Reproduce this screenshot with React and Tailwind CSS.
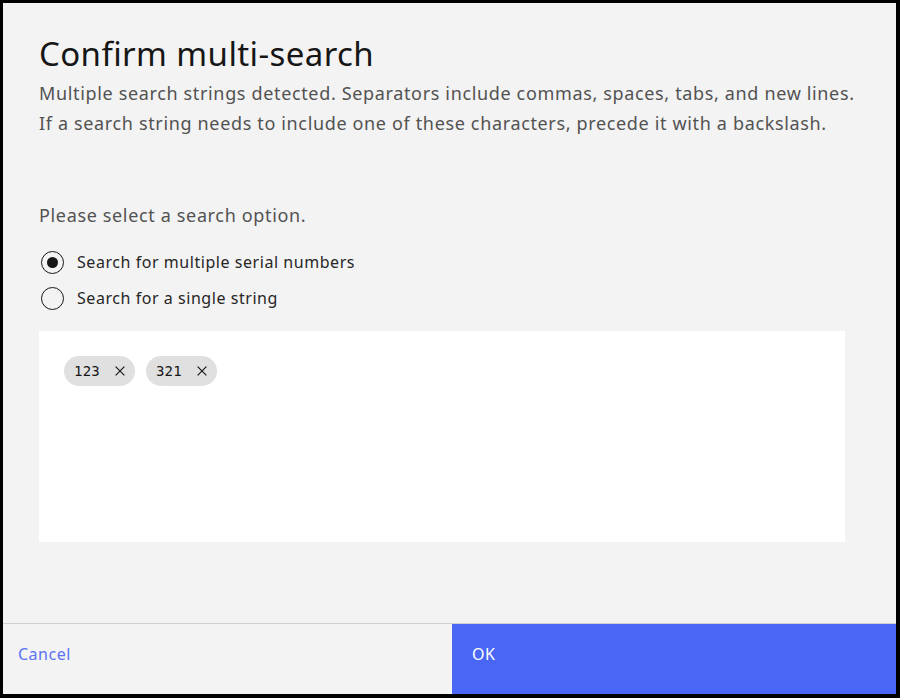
import React from 'react'

const Radio = ({ checked, label }) => {
  return (
    <label className="flex items-center gap-[13px] h-9 cursor-pointer">
      <span className="ml-[2px] w-[23px] h-[23px] rounded-full border-[1.5px] border-[#161616] flex items-center justify-center bg-transparent">
        {checked && <span className="w-[11px] h-[11px] rounded-full bg-[#161616]" />}
      </span>
      <span className="text-[16px] tracking-[0.55px] text-[#262626]">{label}</span>
    </label>
  )
}

const Chip = ({ value }) => {
  return (
    <div className="h-[30px] flex items-center gap-[13px] pl-[10px] pr-[8px] rounded-full bg-[#e0e0e0] text-[#161616]">
      <span className="text-[14px] font-['DejaVu_Sans_Mono',monospace] tracking-[0.2px]">{value}</span>
      <svg width="14" height="14" viewBox="0 0 16 16" fill="none" stroke="#161616" strokeWidth="1.4">
        <path d="M3 3 L13 13 M13 3 L3 13" />
      </svg>
    </div>
  )
}

const App = () => {
  const [option, setOption] = React.useState('multiple')

  return (
    <div className="w-[900px] h-[698px] bg-black pl-[3px] pt-[3px] pr-[4px] pb-[4px] font-['Noto_Sans',sans-serif]">
      <div className="w-full h-full bg-[#f3f3f3] flex flex-col">
        <div className="flex-1 pl-[36px] pr-[20px] pt-[29px]">
          <h1 className="text-[33px] leading-[44px] tracking-[0.4px] text-[#161616]">Confirm multi-search</h1>
          <p className="mt-[2px] text-[18px] leading-[30px] tracking-[0.65px] text-[#525252]">
            Multiple search strings detected. Separators include commas, spaces, tabs, and new lines.
            <br />
            If a search string needs to include one of these characters, precede it with a backslash.
          </p>
          <p className="mt-[62px] text-[18px] leading-[30px] tracking-[0.65px] text-[#525252]">Please select a search option.</p>
          <div className="mt-[14px] flex flex-col">
            <div onClick={() => setOption('multiple')}>
              <Radio checked={option === 'multiple'} label="Search for multiple serial numbers" />
            </div>
            <div onClick={() => setOption('single')}>
              <Radio checked={option === 'single'} label="Search for a single string" />
            </div>
          </div>
          <div className="mt-[15px] w-[806px] h-[211px] bg-white px-[25px] pt-[25px] flex items-start gap-[11px]">
            <Chip value="123" />
            <Chip value="321" />
          </div>
        </div>
        <div className="h-[71px] border-t border-[#cfcfcf] flex">
          <button className="w-[449px] h-full text-left pl-[15px] pb-[10px] text-[16px] tracking-[0.5px] text-[#5b73f4]">Cancel</button>
          <button className="flex-1 h-full text-left pl-[20px] pb-[10px] text-[16px] tracking-[0.5px] text-white bg-[#4a66f5]">OK</button>
        </div>
      </div>
    </div>
  )
}

export default App
